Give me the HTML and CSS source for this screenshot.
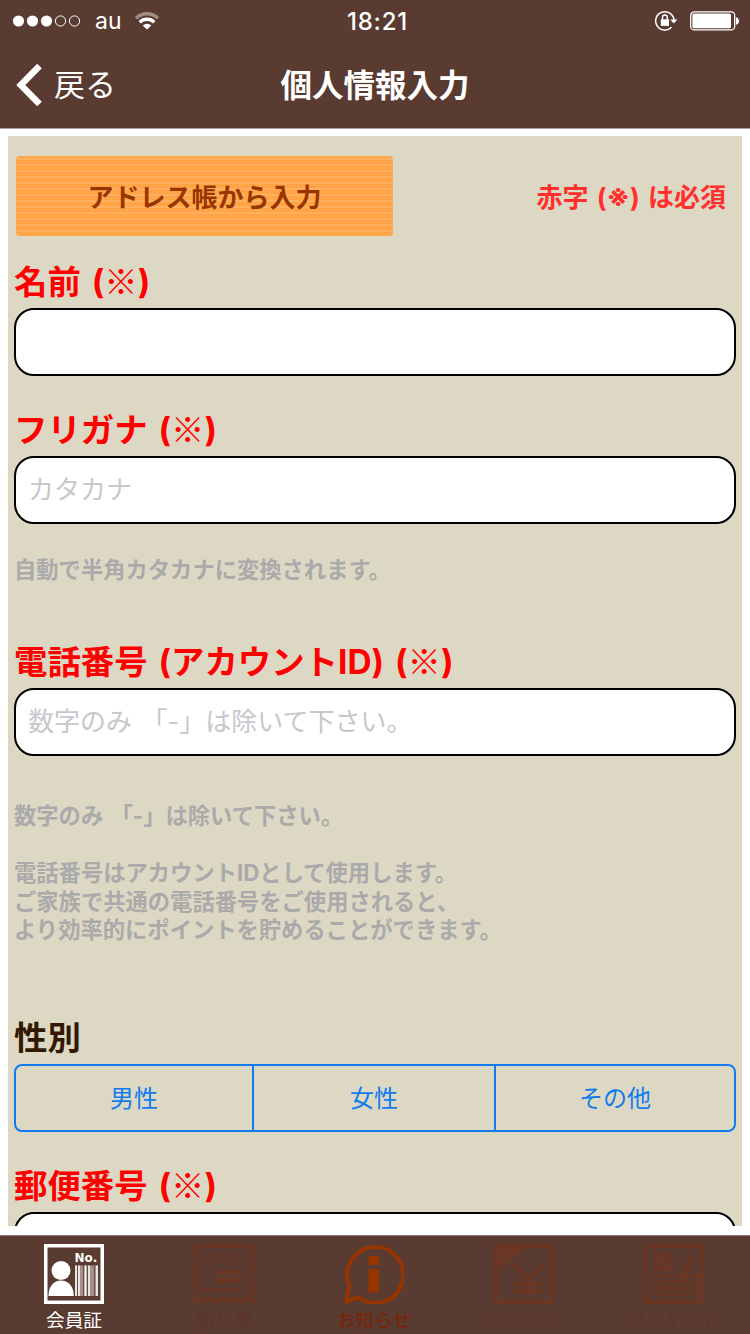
FILE: index.html
```html
<!DOCTYPE html>
<html lang="ja">
<head>
    <meta charset="UTF-8">
    <meta name="viewport" content="width=device-width, initial-scale=1.0">
    <title>個人情報入力</title>
    <link rel="stylesheet" href="styles.css">
</head>
<body>
    <header>
        <div class="status-bar">
            <div class="status-left">
                <svg width="68" height="14" viewBox="0 0 68 14" fill="#fff">
                    <circle cx="5.5" cy="7" r="5.6"/>
                    <circle cx="19.5" cy="7" r="5.6"/>
                    <circle cx="33.5" cy="7" r="5.6"/>
                    <circle cx="47.5" cy="7" r="5.1" fill="none" stroke="#fff"/>
                    <circle cx="61.5" cy="7" r="5.1" fill="none" stroke="#fff"/>
                </svg>
                <span class="carrier">au</span>
                <svg width="26" height="20" viewBox="0 0 26 20" fill="none" stroke="#fff" stroke-width="3.4">
                    <path d="M2 7.2A16 16 0 0 1 24 7.2" stroke="#a08c86"/>
                    <path d="M5.7 11.2A10.5 10.5 0 0 1 20.3 11.2"/>
                    <path d="M13 18.5L8.7 14.4A6.2 6.2 0 0 1 17.3 14.4Z" fill="#fff" stroke="none"/>
                </svg>
            </div>
            <span class="time">18:21</span>
            <div class="status-right">
                <svg width="25" height="22" viewBox="0 0 25 22" fill="none" stroke="#fff" stroke-width="1.5">
                    <path d="M20 10A9.2 9.2 0 1 0 17.5 17.3"/>
                    <path d="M16.2 9.5H23.4L19.8 13.4Z" fill="#fff" stroke="none"/>
                    <rect x="6.8" y="9.3" width="8.2" height="6.6" fill="#fff" stroke="none"/>
                    <path d="M8.5 10V7.4a2.4 2.4 0 0 1 4.8 0V10"/>
                </svg>
                <svg width="50" height="20" viewBox="0 0 50 20" fill="#fff">
                    <rect x="0.7" y="0.9" width="44" height="18" rx="3.5" fill="none" stroke="#fff" stroke-width="1.3"/>
                    <rect x="2.4" y="2.6" width="38.6" height="14.6" rx="1.5"/>
                    <path d="M46 6.2c4 1 4 6.6 0 7.6z"/>
                </svg>
            </div>
        </div>
        <div class="nav-bar">
            <a class="back">
                <svg width="26" height="42" viewBox="0 0 26 42" fill="none" stroke="#fff" stroke-width="6.5">
                    <path d="M23.5 2L4.8 21L23.5 40"/>
                </svg>
                <span>戻る</span>
            </a>
            <h1>個人情報入力</h1>
        </div>
    </header>

    <main>
        <form class="form">
            <div class="form-top">
                <button type="button" class="address-btn">アドレス帳から入力</button>
                <p class="required-note">赤字 (<span>※</span>) は必須</p>
            </div>

            <div class="field">
                <label class="required" for="name">名前 (<span>※</span>)</label>
                <input type="text" id="name">
            </div>

            <div class="field">
                <label class="required" for="kana">フリガナ (<span>※</span>)</label>
                <input type="text" id="kana" placeholder="カタカナ">
                <p class="hint">自動で半角カタカナに変換されます。</p>
            </div>

            <div class="field field-tel">
                <label class="required" for="tel">電話番号 (アカウントID) (<span>※</span>)</label>
                <input type="tel" id="tel" placeholder="数字のみ 「-」は除いて下さい。">
                <p class="hint">数字のみ 「-」は除いて下さい。<br>
                <br>
                電話番号はアカウントIDとして使用します。<br>
                ご家族で共通の電話番号をご使用されると、<br>
                より効率的にポイントを貯めることができます。</p>
            </div>

            <div class="field">
                <label>性別</label>
                <div class="segment">
                    <a>男性</a>
                    <a>女性</a>
                    <a>その他</a>
                </div>
            </div>

            <div class="field">
                <label class="required" for="zip">郵便番号 (<span>※</span>)</label>
                <input type="text" id="zip">
            </div>
        </form>
    </main>

    <nav class="tab-bar">
        <a class="tab active">
            <svg width="60" height="60" viewBox="0 0 60 60" fill="#fff">
                <rect x="1.75" y="1.75" width="56.5" height="56.5" fill="none" stroke="#fff" stroke-width="3.5"/>
                <circle cx="17" cy="26.5" r="9.5"/>
                <path d="M4.5 52C4.5 42 10 36.5 17 36.5S29.8 42 29.8 52Z"/>
                <text class="icon-no" x="30.5" y="18">No.</text>
                <rect x="31" y="21.5" width="23" height="30.5" fill="#a39088"/>
                <path d="M32 21.5V52M35 21.5V52M41.5 21.5V52M45 21.5V52M53 21.5V52" stroke="#fff" stroke-width="1.5"/>
                <path d="M33.5 21.5V52M39.5 21.5V52M43.5 21.5V52M50.5 21.5V52" stroke="#6d5046" stroke-width="1"/>
            </svg>
            会員証
        </a>
        <a class="tab">
            <svg width="62" height="60" viewBox="0 0 62 60" fill="#6a3724">
                <path d="M3 57V2H59V57L54 54L48 58L42 54L36 58L30 54L24 58L18 54L12 58L7 54Z" fill="none" stroke="#6a3724" stroke-width="4"/>
                <text class="icon-date" x="9" y="20">XX/XX</text>
                <path d="M23 26H50V31H23ZM23 34H50V39H23Z"/>
                <path d="M9 46H50" stroke="#6a3724" stroke-width="4" stroke-dasharray="4 1"/>
            </svg>
            預り票
        </a>
        <a class="tab news">
            <svg width="60" height="60" viewBox="0 0 60 60" fill="#963500">
                <path d="M5.5 42A28 28 0 1 1 14 53L2.500 58Z" fill="none" stroke="#963500" stroke-width="4" stroke-linejoin="round"/>
                <path d="M24.5 12H35V21H24.5ZM24.5 25H35V48.5H24.5Z"/>
            </svg>
            お知らせ
        </a>
        <a class="tab">
            <svg width="60" height="60" viewBox="0 0 60 60" fill="#6a3724">
                <rect x="2" y="2" width="56" height="56" fill="none" stroke="#6a3724" stroke-width="4"/>
                <path d="M2 2H33L2 29Z"/>
                <path d="M20 20L35 36L50 20M35.5 35V52M20 40H50M20 47H50" fill="none" stroke="#6a3724" stroke-width="4.5"/>
            </svg>
            クーポン
        </a>
        <a class="tab">
            <svg width="60" height="60" viewBox="0 0 60 60" fill="#6a3724">
                <rect x="2" y="2" width="56" height="56" fill="none" stroke="#6a3724" stroke-width="4"/>
                <rect x="9" y="9" width="18" height="18"/>
                <path d="M13 18L17 22L24 14" fill="none" stroke="#593b31" stroke-width="2"/>
                <path d="M7 32H56M7 38H56M7 44H56M7 50H56" stroke="#6a3724" stroke-width="3"/>
                <path d="M32 43L34 33L46 12L52 16L40 37Z"/>
            </svg>
            アンケート
        </a>
    </nav>
</body>
</html>
```
FILE: styles.css
```css
* {
    box-sizing: border-box;
}
body {
    margin: 0;
    height: 1334px;
    display: flex;
    flex-direction: column;
    overflow: hidden;
    font-family: Inter, "Noto Sans CJK JP", sans-serif;
    background-color: #fff;
}
p, h1 {
    margin: 0;
}
svg {
    display: block;
}

/* header */
header {
    height: 129px;
    flex: none;
    background-color: #593b31;
    border-bottom: 1px solid #ac9d98;
    color: #fff;
}
.status-bar {
    height: 41px;
    padding: 0 10px 0 13px;
    display: grid;
    grid-template-columns: 1fr auto 1fr;
    align-items: center;
    font-size: 23px;
}
.status-left, .status-right {
    display: flex;
    align-items: center;
}
.carrier {
    margin: 0 12px 0 14px;
}
.time {
    padding: 1px 0 0 2px;
    font-size: 24px;
    font-weight: 500;
    letter-spacing: 0.8px;
}
.status-right {
    justify-content: flex-end;
    gap: 11px;
}
.nav-bar {
    height: 87px;
    padding: 0 16px;
    display: grid;
    grid-template-columns: 1fr auto 1fr;
    align-items: center;
}
.back {
    display: flex;
    align-items: center;
    gap: 12px;
    font-size: 31px;
}
.back span, h1 {
    padding-bottom: 4px;
}
h1 {
    font-size: 31.5px;
    font-weight: bold;
}

/* form */
main {
    height: 1106px;
    flex: none;
    padding: 7px 8px 9px;
}
.form {
    height: 1090px;
    overflow: hidden;
    padding: 20px 6px 0;
    background-color: #ddd8c4;
}
.form-top {
    display: flex;
    justify-content: space-between;
    align-items: center;
    padding: 0 10px 0 2px;
    margin-bottom: 20px;
}
.address-btn {
    width: 377px;
    height: 80px;
    padding: 0 0 2px;
    border: none;
    border-radius: 4px;
    background: repeating-linear-gradient(#ffa548 0, #ffa548 2px, #ffb160 2px, #ffb160 4px, #ffa548 4px, #ffa548 6px);
    color: #993600;
    font-family: inherit;
    font-size: 26px;
    font-weight: bold;
}
.required-note {
    padding-top: 2px;
    color: #ff302d;
    font-size: 26px;
    font-weight: bold;
    line-height: 40px;
    word-spacing: 2px;
}
.required-note span {
    font-size: 29px;
}
.field {
    margin-bottom: 28px;
}
label {
    display: block;
    height: 52px;
    line-height: 53px;
    color: #331900;
    font-size: 33.4px;
    font-weight: bold;
    white-space: nowrap;
    word-spacing: 3px;
}
label.required {
    color: #f00;
}
label span {
    font-family: "Noto Sans CJK JP", sans-serif;
    font-weight: normal;
    line-height: 1;
}
input {
    display: block;
    width: 100%;
    height: 68px;
    padding: 0 12px 2px;
    border: 2px solid #000;
    border-radius: 20px;
    background-color: #fff;
    font-family: inherit;
    font-size: 26px;
    word-spacing: 2px;
}
input::placeholder {
    color: #c7c7cc;
    opacity: 1;
}
.hint {
    padding: 32px 0 23.5px;
    color: #aaa;
    font-size: 22.3px;
    font-weight: bold;
    line-height: 28.5px;
    word-spacing: 2px;
}
.field-tel .hint {
    padding: 46px 0 39.5px;
}
.segment {
    height: 68px;
    display: grid;
    grid-template-columns: 236px 242px 1fr;
    border: 2px solid #117cf0;
    border-radius: 8px;
    color: #117cf0;
    font-size: 24px;
    line-height: 66px;
    text-align: center;
}
.segment a {
    height: 64px;
}
.segment a + a {
    border-left: 2px solid #117cf0;
}

/* bottom tabs */
.tab-bar {
    height: 99px;
    flex: none;
    display: grid;
    grid-template-columns: repeat(5, 1fr);
    background-color: #593b31;
    border-top: 1px solid #8e7a73;
}
.tab {
    display: flex;
    flex-direction: column;
    align-items: center;
    padding: 8px 2px 0 0;
    color: #5e3428;
    font-size: 18.7px;
    line-height: 33px;
    white-space: nowrap;
}
.tab svg {
    height: 60px;
    flex: none;
}
.tab.active {
    color: #fff;
}
.tab.news {
    color: #7c2305;
}
.icon-no {
    font: bold 12px "DejaVu Sans", sans-serif;
}
.icon-date {
    font: bold 14px "Liberation Sans", sans-serif;
}
```
